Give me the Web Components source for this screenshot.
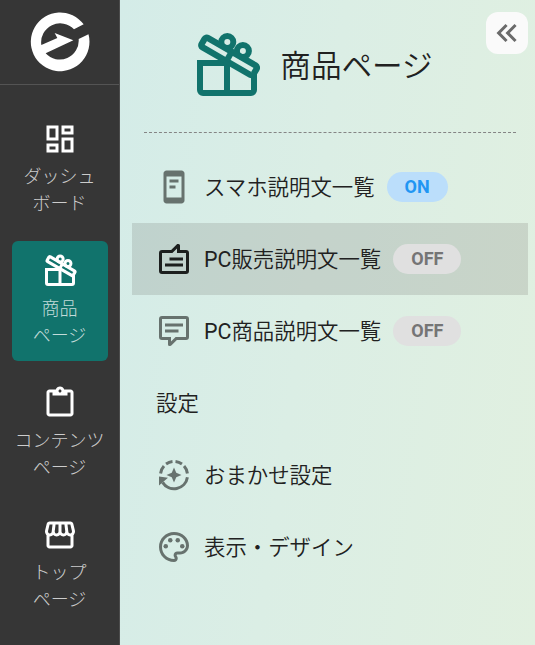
<!DOCTYPE html>
<html lang="ja">
<head>
<meta charset="utf-8">
<title>商品ページ</title>
<style>
  body {
    margin: 0;
    font-family: Roboto, "Noto Sans CJK JP", sans-serif;
    color: #212121;
  }
  .latin { font-weight: 400; }
</style>
</head>
<body>
<app-shell>
  <side-nav slot="nav">
    <nav-item icon="dashboard">ダッシュ<br>ボード</nav-item>
    <nav-item icon="gift" active>商品<br>ページ</nav-item>
    <nav-item icon="clipboard">コンテンツ<br>ページ</nav-item>
    <nav-item icon="store">トップ<br>ページ</nav-item>
  </side-nav>
  <menu-panel icon="gift">
    <span slot="title">商品ページ</span>
    <menu-row icon="phone">スマホ説明文一覧<status-chip slot="chip" on>ON</status-chip></menu-row>
    <menu-row icon="comment-up" active><span class="latin">PC</span>販売説明文一覧<status-chip slot="chip">OFF</status-chip></menu-row>
    <menu-row icon="comment"><span class="latin">PC</span>商品説明文一覧<status-chip slot="chip">OFF</status-chip></menu-row>
    <menu-row heading>設定</menu-row>
    <menu-row icon="auto">おまかせ設定</menu-row>
    <menu-row icon="palette">表示・デザイン</menu-row>
  </menu-panel>
</app-shell>

<script>
const comment = '<path d="M9 22a1 1 0 0 1-1-1v-3H4a2 2 0 0 1-2-2V4a2 2 0 0 1 2-2h16a2 2 0 0 1 2 2v12a2 2 0 0 1-2 2h-6.1l-3.7 3.71c-.2.19-.45.29-.7.29H9m1-6v3.08L13.08 16H20V4H4v12h6M6 7h12v2H6V7m0 4h9v2H6v-2z"/>';

const ICONS = {
  dashboard: '<path d="M19 5v2h-4V5h4M9 5v6H5V5h4m10 8v6h-4v-6h4M9 17v2H5v-2h4M21 3h-8v6h8V3zM11 3H3v10h8V3zm10 8h-8v10h8V11zm-10 4H3v6h8v-6z"/>',
  gift: `<g fill="none" stroke="currentColor" stroke-width="2">
    <path d="M12.5 11H3v9a1 1 0 0 0 1 1h16a1 1 0 0 0 1-1v-5.5M12 10v11"/>
    <circle cx="12.1" cy="4" r="2"/><circle cx="17.3" cy="7" r="2"/>
    <g transform="translate(12.7 8.8) rotate(30)">
      <rect x="-10" y="-1.8" width="20" height="3.6" rx=".8" stroke-width="2.1"/><path d="M0-1.7v3.4"/>
    </g></g>`,
  clipboard: '<path d="M19 3h-4.18C14.4 1.84 13.3 1 12 1s-2.4.84-2.82 2H5c-1.1 0-2 .9-2 2v14c0 1.1.9 2 2 2h14c1.1 0 2-.9 2-2V5c0-1.1-.9-2-2-2m-7 0c.55 0 1 .45 1 1s-.45 1-1 1-1-.45-1-1 .45-1 1-1M7 7h10V5h2v14H5V5h2v2z"/>',
  store: '<path d="M21.9 8.89l-1.05-4.37c-.22-.9-1-1.52-1.91-1.52H5.05c-.9 0-1.69.63-1.9 1.52L2.1 8.89c-.24 1.02-.02 2.06.62 2.88.08.11.19.19.28.29V19c0 1.1.9 2 2 2h14c1.1 0 2-.9 2-2v-6.94c.09-.09.2-.18.28-.28.64-.82.87-1.87.62-2.89zm-2.99-3.9l1.05 4.37c.1.42.01.84-.25 1.17-.14.18-.44.47-.94.47-.61 0-1.14-.49-1.21-1.14L16.98 5l1.93-.01zM13 5h1.96l.54 4.52c.05.39-.07.78-.33 1.07-.22.26-.54.41-.95.41-.67 0-1.22-.59-1.22-1.31V5zM8.49 9.52L9.04 5H11v4.69c0 .72-.55 1.31-1.29 1.31-.34 0-.65-.15-.89-.41-.25-.29-.37-.68-.33-1.07zm-4.45-.16L5.05 5h1.97l-.58 4.86c-.08.65-.6 1.14-1.21 1.14-.49 0-.8-.29-.93-.47-.27-.32-.36-.75-.26-1.17zM5 19v-6.03c.08.01.15.03.23.03.87 0 1.66-.36 2.24-.95.6.6 1.4.95 2.31.95.87 0 1.65-.36 2.23-.93.59.57 1.39.93 2.29.93.84 0 1.64-.35 2.24-.95.58.59 1.37.95 2.24.95.08 0 .15-.02.23-.03V19H5z"/>',
  phone: '<path d="M17 1H7c-1.1 0-2 .9-2 2v18c0 1.1.9 2 2 2h10c1.1 0 2-.9 2-2V3c0-1.1-.9-2-2-2zm0 18H7V5h10v14zM9 7h6v2H9zM9 11h4v2H9z"/>',
  comment,
  'comment-up': `<g transform="rotate(180 12 12)">${comment}</g>`,
  auto: `<g fill="none" stroke="currentColor" stroke-width="2">
    <path d="M3.06 11A9 9 0 0 1 5.3 6M6.7 4.7A9 9 0 0 1 11 3.05M13 3.05A9 9 0 0 1 17.3 4.7M18.7 6A9 9 0 0 1 20.94 11M20.94 13.5A9 9 0 0 1 4.4 16.9"/></g>
    <path d="M2 13l6 .8L2 19zM12 7l1.5 3.5L17 12l-3.5 1.5L12 17l-1.5-3.5L7 12l3.5-1.5z"/>`,
  palette: '<path d="M12 22C6.49 22 2 17.51 2 12S6.49 2 12 2s10 4.04 10 9c0 3.31-2.69 6-6 6h-1.77c-.28 0-.5.22-.5.5 0 .12.05.23.13.33.41.47.64 1.06.64 1.67 0 1.38-1.12 2.5-2.5 2.5zm0-18c-4.41 0-8 3.59-8 8s3.59 8 8 8c.28 0 .5-.22.5-.5 0-.16-.08-.28-.14-.35-.41-.46-.63-1.05-.63-1.65 0-1.38 1.12-2.5 2.5-2.5H16c2.21 0 4-1.79 4-4 0-3.86-3.59-7-8-7z"/><circle cx="6.5" cy="11.5" r="1.5"/><circle cx="9.5" cy="7.5" r="1.5"/><circle cx="14.5" cy="7.5" r="1.5"/><circle cx="17.5" cy="11.5" r="1.5"/>',
  collapse: '<path d="M18.41 7.41L17 6l-6 6 6 6 1.41-1.41L13.83 12l4.58-4.59m-6 0L11 6l-6 6 6 6 1.41-1.41L7.83 12l4.58-4.59z"/>'
};

// Square icon, sized with --size and coloured by the inherited text colour
class UiIcon extends HTMLElement {
  connectedCallback() {
    if (this.shadowRoot) return;
    this.attachShadow({ mode: 'open' }).innerHTML = `
      <style>
        :host { display: block; flex: none; width: var(--size, 36px); height: var(--size, 36px); }
        svg { display: block; width: 100%; height: 100%; fill: currentColor; overflow: visible; }
      </style>
      <svg viewBox="0 0 24 24">${ICONS[this.getAttribute('name')] || ''}</svg>
    `;
  }
}

class AppShell extends HTMLElement {
  constructor() {
    super();
    this.attachShadow({ mode: 'open' }).innerHTML = `
      <style>
        :host {
          display: grid;
          grid-template-columns: 120px 1fr;
          height: 100vh;
          overflow: hidden;
        }
      </style>
      <slot name="nav"></slot>
      <slot></slot>
    `;
  }
}

class SideNav extends HTMLElement {
  constructor() {
    super();
    this.attachShadow({ mode: 'open' }).innerHTML = `
      <style>
        :host {
          display: flex;
          flex-direction: column;
          box-sizing: border-box;
          background: #363636;
          border-right: 1px solid #4c4c4c;
        }
        .brand {
          display: flex;
          justify-content: center;
          box-sizing: border-box;
          height: 85px;
          padding-top: 12px;
          border-bottom: 1px solid #545454;
        }
        .brand svg { width: 60px; height: 60px; fill: #fff; overflow: visible; }
        nav {
          display: flex;
          flex-direction: column;
          gap: 12px;
          padding: 24px 11px 0 12px;
        }
      </style>
      <div class="brand">
        <svg viewBox="90 36 180 180">
          <path d="M251 73A88 88 0 1 0 265.5 103L236 117A57 57 0 0 1 137 160L220 121 164 99 172 114 124 135A57 57 0 0 1 222 88Z"/>
        </svg>
      </div>
      <nav><slot></slot></nav>
    `;
  }
}

class NavItem extends HTMLElement {
  connectedCallback() {
    if (this.shadowRoot) return;
    this.attachShadow({ mode: 'open' }).innerHTML = `
      <style>
        :host {
          display: flex;
          flex-direction: column;
          align-items: center;
          gap: 6px;
          box-sizing: border-box;
          height: 120px;
          padding-top: 12px;
          border-radius: 6px;
          color: #fff;
        }
        :host([active]) { background: #11736c; }
        .label {
          padding-right: 1px;
          font-size: 18px;
          font-weight: 300;
          line-height: 27px;
          text-align: center;
          white-space: nowrap;
          color: rgba(255, 255, 255, .75);
        }
      </style>
      <ui-icon name="${this.getAttribute('icon')}"></ui-icon>
      <div class="label"><slot></slot></div>
    `;
  }
}

class MenuPanel extends HTMLElement {
  connectedCallback() {
    if (this.shadowRoot) return;
    this.attachShadow({ mode: 'open' }).innerHTML = `
      <style>
        :host {
          display: block;
          position: relative;
          background: linear-gradient(98deg, #d4ece8, #dbeee5 45%, #e1f0e0);
        }
        header {
          display: flex;
          align-items: center;
          justify-content: center;
          gap: 17px;
          box-sizing: border-box;
          height: 133px;
          margin: 0 19px 0 24px;
          padding-right: 36px;
          border-bottom: 1px dashed #858585;
        }
        header ui-icon { --size: 72px; color: #11736c; }
        h1 { margin: 0; font-size: 30.6px; font-weight: 350; line-height: 45px; }
        .rows { padding: 18px 7px 0 12px; }
        /* floats over the header corner */
        button {
          position: absolute;
          top: 12px;
          right: 7px;
          display: flex;
          align-items: center;
          justify-content: center;
          width: 42px;
          height: 42px;
          padding: 0;
          border: 0;
          border-radius: 12px;
          background: #fafafa;
          color: #6a6a6a;
        }
      </style>
      <header>
        <ui-icon name="${this.getAttribute('icon')}"></ui-icon>
        <h1><slot name="title"></slot></h1>
      </header>
      <button type="button"><ui-icon name="collapse"></ui-icon></button>
      <div class="rows"><slot></slot></div>
    `;
  }
}

class MenuRow extends HTMLElement {
  connectedCallback() {
    if (this.shadowRoot) return;
    const icon = this.getAttribute('icon');
    this.attachShadow({ mode: 'open' }).innerHTML = `
      <style>
        :host {
          display: flex;
          align-items: center;
          gap: 12px;
          box-sizing: border-box;
          height: 72px;
          padding: 0 24px;
        }
        :host([active]) { background: rgba(20, 0, 0, .11); }
        ui-icon { color: #67726e; }
        :host([active]) ui-icon { color: #1c1f1e; }
        .text {
          padding-top: 2px;
          font-size: 21.42px;
          font-weight: 350;
          line-height: 32px;
          white-space: nowrap;
        }
      </style>
      ${icon ? `<ui-icon name="${icon}"></ui-icon>` : ''}
      <span class="text"><slot></slot></span>
      <slot name="chip"></slot>
    `;
  }
}

class StatusChip extends HTMLElement {
  constructor() {
    super();
    this.attachShadow({ mode: 'open' }).innerHTML = `
      <style>
        :host {
          display: inline-flex;
          align-items: center;
          height: 30px;
          padding: 0 18px;
          border-radius: 15px;
          background: #e0e0e0;
          color: #757575;
          font-size: 18px;
          font-weight: 700;
          line-height: 30px;
        }
        :host([on]) { background: #bbdefb; color: #2196f3; }
      </style>
      <slot></slot>
    `;
  }
}

customElements.define('ui-icon', UiIcon);
customElements.define('app-shell', AppShell);
customElements.define('side-nav', SideNav);
customElements.define('nav-item', NavItem);
customElements.define('menu-panel', MenuPanel);
customElements.define('menu-row', MenuRow);
customElements.define('status-chip', StatusChip);
</script>
</body>
</html>
